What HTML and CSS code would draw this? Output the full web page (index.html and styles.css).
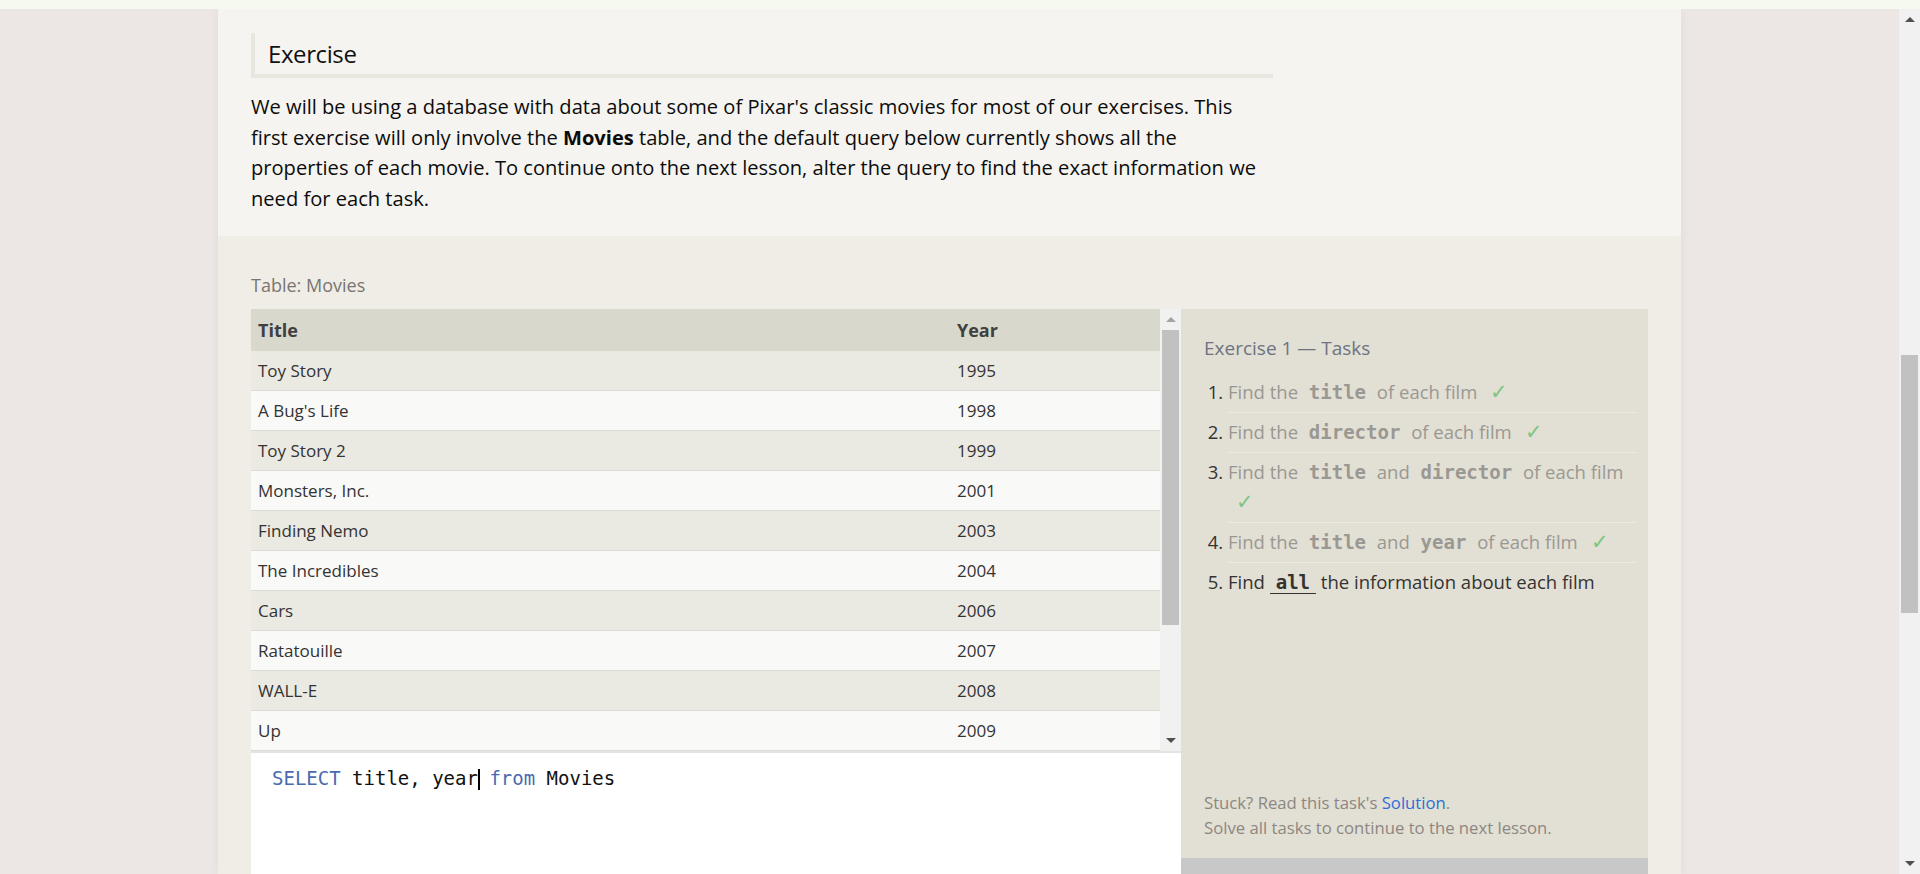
FILE: index.html
```html
<!DOCTYPE html>
<html lang="en">
<head>
<meta charset="utf-8">
<title>SQL Lesson – Exercise</title>
<link rel="stylesheet" href="styles.css">
</head>
<body>
<div class="topbar"></div>
<div class="viewport">
  <main class="page">
    <div class="panel">
      <section class="intro">
        <h2 class="ex-heading">Exercise</h2>
        <p class="ex-text">We will be using a database with data about some of Pixar's classic movies for most of our exercises. This first exercise will only involve the <strong>Movies</strong> table, and the default query below currently shows all the properties of each movie. To continue onto the next lesson, alter the query to find the exact information we need for each task.</p>
      </section>
      <section class="exercise">
        <div class="table-label">Table: Movies</div>
        <div class="workspace">
          <div class="left-col">
            <div class="table-wrap">
              <table class="data">
                <colgroup><col class="col-title"><col></colgroup>
                <thead><tr><th>Title</th><th>Year</th></tr></thead>
                <tbody>
                  <tr><td>Toy Story</td><td>1995</td></tr>
                  <tr><td>A Bug's Life</td><td>1998</td></tr>
                  <tr><td>Toy Story 2</td><td>1999</td></tr>
                  <tr><td>Monsters, Inc.</td><td>2001</td></tr>
                  <tr><td>Finding Nemo</td><td>2003</td></tr>
                  <tr><td>The Incredibles</td><td>2004</td></tr>
                  <tr><td>Cars</td><td>2006</td></tr>
                  <tr><td>Ratatouille</td><td>2007</td></tr>
                  <tr><td>WALL-E</td><td>2008</td></tr>
                  <tr><td>Up</td><td>2009</td></tr>
                </tbody>
              </table>
              <div class="sbar table-sbar">
                <div class="sb-btn"><span class="tri-up dim"></span></div>
                <div class="sb-thumb table-thumb"></div>
                <div class="sb-fill"></div>
                <div class="sb-btn"><span class="tri-down"></span></div>
              </div>
            </div>
            <div class="editor"><span class="kw">SELECT</span> title, year<span class="caret"></span> <span class="kw">from</span> Movies</div>
          </div>
          <div class="right-col">
            <div class="tasks">
              <h3>Exercise 1 — Tasks</h3>
              <ol>
                <li>Find the <code>title</code> of each film <span class="check">✓</span></li>
                <li>Find the <code>director</code> of each film <span class="check">✓</span></li>
                <li>Find the <code>title</code> and <code>director</code> of each film <span class="check">✓</span></li>
                <li>Find the <code>title</code> and <code>year</code> of each film <span class="check">✓</span></li>
                <li class="current">Find <code>all</code> the information about each film</li>
              </ol>
              <div class="help">
                Stuck? Read this task's <a href="#">Solution</a>.<br>
                Solve all tasks to continue to the next lesson.
              </div>
            </div>
            <div class="run-bar"></div>
          </div>
        </div>
      </section>
    </div>
  </main>
  <div class="sbar page-sbar">
    <div class="sb-btn"><span class="tri-up"></span></div>
    <div class="sb-thumb page-thumb"></div>
    <div class="sb-fill"></div>
    <div class="sb-btn"><span class="tri-down"></span></div>
  </div>
</div>
</body>
</html>
```
FILE: styles.css
```css
html, body {
  margin: 0;
  height: 100%;
}
body {
  background: #ece7e4;
  font-family: "Open Sans", "Noto Sans", sans-serif;
  overflow: hidden;
  color: #111;
}
.topbar {
  height: 9px;
  background: #f6f9ef;
}
.viewport {
  display: flex;
  height: 865px;
}
.page {
  flex: 1;
  overflow: hidden;
}
.panel {
  width: 1463px;
  margin: 0 auto;
  background: #f5f4f0;
  box-shadow: 0 0 10px rgba(0, 0, 0, 0.05);
  height: 100%;
}
.intro {
  padding: 24px 33px 22px;
}
.ex-heading {
  margin: 0 0 14px;
  width: 1022px;
  height: 45px;
  box-sizing: border-box;
  border-left: 4px solid #e8e7df;
  border-bottom: 4px solid #e8e7df;
  padding-left: 13px;
  font-size: 24px;
  font-weight: 400;
  line-height: 41px;
  letter-spacing: -0.4px;
  color: #111;
}
.ex-text {
  margin: 0;
  width: 1022px;
  font-size: 20.1px;
  line-height: 30.5px;
  color: #0c0c0c;
}
.ex-text strong {
  font-weight: 700;
}
.exercise {
  background: #efede6;
  padding: 37px 33px 0;
  border-radius: 3px 3px 0 0;
  height: 700px;
}
.table-label {
  font-size: 18px;
  line-height: 24px;
  color: #7a7570;
  margin-bottom: 12px;
}
.workspace {
  display: flex;
}
.left-col {
  width: 930px;
  display: flex;
  flex-direction: column;
}
.table-wrap {
  display: flex;
  height: 442px;
}
.data {
  width: 909px;
  table-layout: fixed;
  border-spacing: 0;
  font-size: 17px;
  color: #333;
  align-self: flex-start;
}
.col-title {
  width: 699px;
}
.data th {
  background: #d9d8cc;
  text-align: left;
  padding: 0 7px;
  font-size: 18px;
  font-weight: 700;
  line-height: 42px;
  color: #404040;
}
.data td {
  padding: 0 7px;
  line-height: 39px;
  border-bottom: 1px solid #dcdbd5;
  white-space: nowrap;
}
.data tbody tr:nth-child(odd) td {
  background: #eae9e2;
}
.data tbody tr:nth-child(even) td {
  background: #f9f9f8;
}
.sbar {
  width: 21px;
  flex: none;
  background: #f1f1f1;
  display: flex;
  flex-direction: column;
  align-items: center;
}
.sb-btn {
  width: 21px;
  height: 21px;
  display: flex;
  align-items: center;
  justify-content: center;
  flex: none;
}
.sb-thumb {
  width: 17px;
  background: #c1c1c1;
  flex: none;
}
.sb-fill {
  flex: 1;
}
.tri-up {
  width: 0;
  height: 0;
  border-left: 5px solid transparent;
  border-right: 5px solid transparent;
  border-bottom: 5px solid #505050;
}
.tri-down {
  width: 0;
  height: 0;
  border-left: 5px solid transparent;
  border-right: 5px solid transparent;
  border-top: 5px solid #505050;
}
.tri-up.dim {
  border-bottom-color: #a3a3a3;
}
.table-thumb {
  height: 295px;
}
.page-thumb {
  margin-top: 325px;
  height: 258px;
}
.editor {
  height: 200px;
  background: #fff;
  border-top: 2px solid #e4e4e2;
  padding: 12px 21px;
  font-family: "DejaVu Sans Mono", "Liberation Mono", monospace;
  font-size: 19px;
  line-height: 26px;
  color: #111;
  white-space: pre;
}
.kw {
  color: #4a6bb0;
}
.caret {
  display: inline-block;
  width: 2px;
  height: 21px;
  margin-right: -2px;
  background: #000;
  vertical-align: -5px;
}
.right-col {
  width: 467px;
  display: flex;
  flex-direction: column;
}
.tasks {
  height: 549px;
  box-sizing: border-box;
  background: #e2dfd4;
  padding: 26px 11px 18px 23px;
  display: flex;
  flex-direction: column;
}
.tasks h3 {
  margin: 0;
  font-size: 19px;
  font-weight: 400;
  line-height: 26px;
  color: #6d7382;
}
.tasks ol {
  margin: 12px 0 0;
  padding-left: 24px;
  font-size: 18.5px;
  line-height: 30px;
}
.tasks li {
  padding: 4px 0 5px;
  border-bottom: 1px solid #ebe9e1;
  color: #9a9893;
}
.tasks li::marker {
  color: #333;
}
.tasks li:last-child {
  border-bottom: none;
}
.tasks li.current {
  color: #333;
}
.tasks code {
  font-family: "DejaVu Sans Mono", "Liberation Mono", monospace;
  font-weight: 700;
  font-size: 19px;
  padding: 0 6px;
}
.tasks li.current code {
  border-bottom: 1.5px solid #333;
}
.check {
  color: #7cc67f;
  font-size: 21px;
  line-height: 1;
  margin-left: 8px;
}
.help {
  margin-top: auto;
  font-size: 16.7px;
  line-height: 24.5px;
  color: #8c8782;
}
.help a {
  color: #2f6fd6;
  text-decoration: none;
}
.run-bar {
  height: 60px;
  background: #c8c8c8;
}
```
